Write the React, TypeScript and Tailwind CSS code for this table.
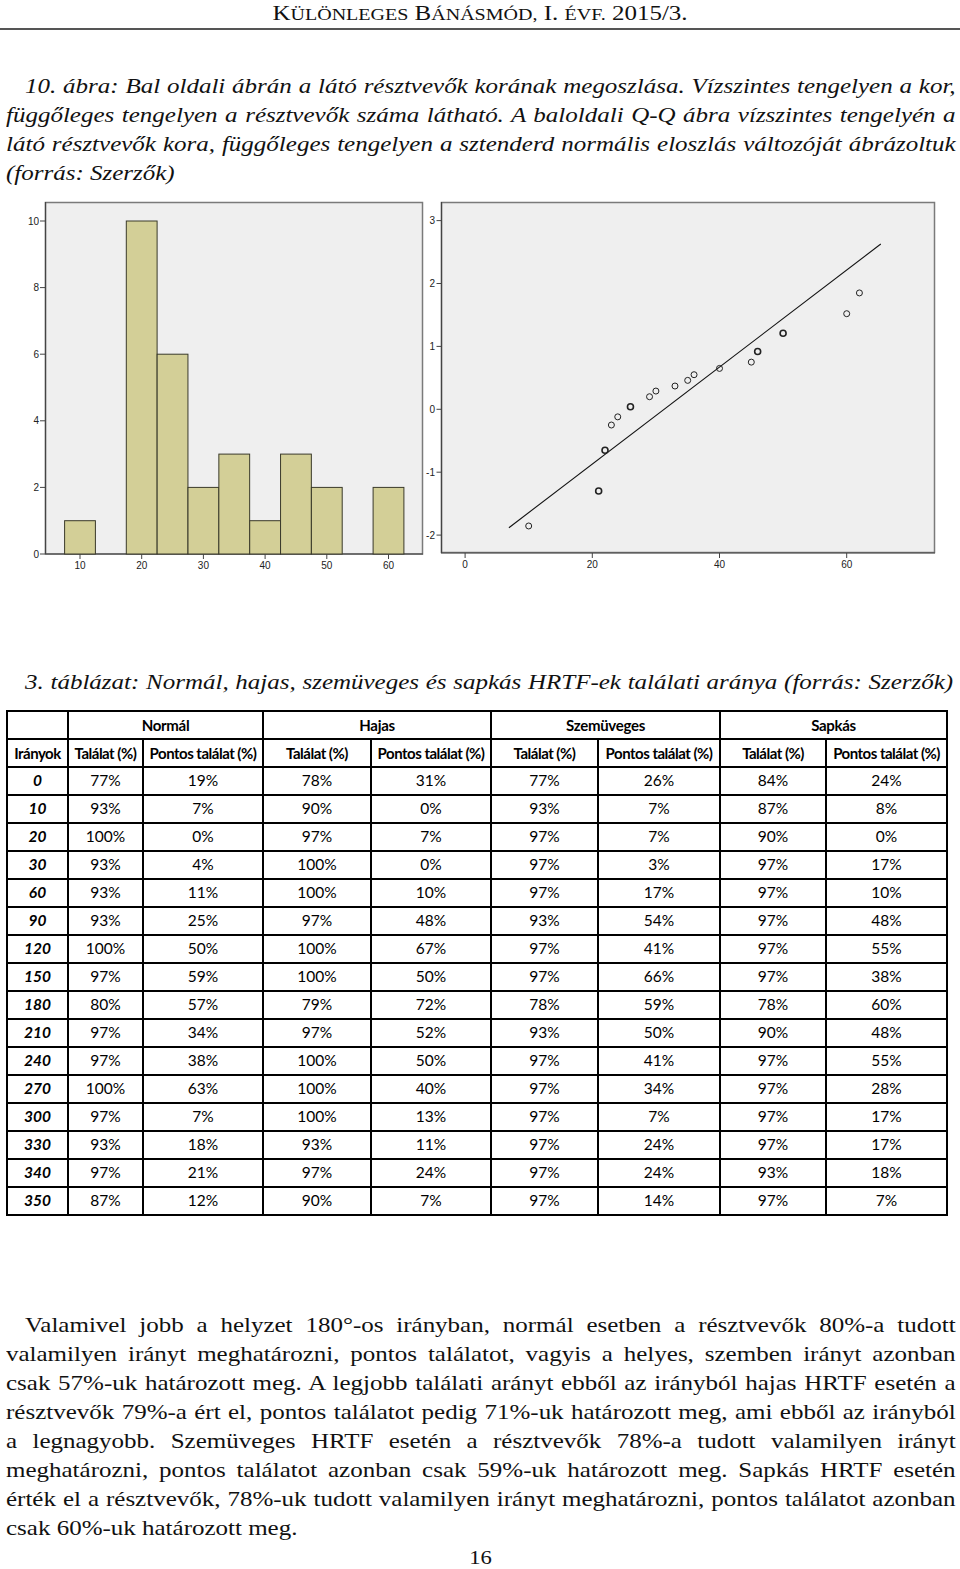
import React from "react";

const serif = { fontFamily: '"Liberation Serif", "Times New Roman", serif' } as const;
const sans = { fontFamily: '"Liberation Sans", Arial, sans-serif' } as const;

const histBars: [number, number][] = [
  [10, 1], [20, 10], [25, 6], [30, 2], [35, 3], [40, 1], [45, 3], [50, 2], [60, 2],
];
const hx = (v: number) => 80 + (v - 10) * 6.17;
const hy = (c: number) => 554 - c * 33.3;

const qqPoints: [number, number, boolean][] = [
  [10, -1.855, false], [21, -1.3, true], [22, -0.65, true], [23, -0.25, false],
  [24, -0.12, false], [26, 0.04, true], [29, 0.2, false], [30, 0.29, false],
  [33, 0.37, false], [35, 0.46, false], [36, 0.55, false], [40, 0.65, false],
  [45, 0.75, false], [46, 0.92, true], [50, 1.21, true], [60, 1.52, false], [62, 1.85, false],
];
const qx = (a: number) => 465.1 + a * 6.36;
const qy = (v: number) => 409.3 - v * 62.9;

function Histogram() {
  return (
    <svg width={424} height={385} viewBox="0 195 424 385" className="block shrink-0">
      <rect x={45.5} y={202.5} width={377} height={351.5} fill="#efefef" stroke="#7a7a7a" strokeWidth={1.5} />
      <line x1={45.5} y1={202} x2={45.5} y2={554} stroke="#444" strokeWidth={1.2} />
      <line x1={45} y1={554} x2={423} y2={554} stroke="#444" strokeWidth={1.2} />
      {histBars.map(([v, c]) => (
        <rect key={v} x={hx(v) - 15.4} y={hy(c)} width={30.8} height={c * 33.3} fill="#d3cf97" stroke="#3a3a2a" strokeWidth={1} />
      ))}
      {[0, 2, 4, 6, 8, 10].map((c) => (
        <g key={c}>
          <line x1={40} y1={hy(c)} x2={45} y2={hy(c)} stroke="#444" strokeWidth={1} />
          <text x={39} y={hy(c) + 3.5} fontSize={10} textAnchor="end" fill="#222" style={sans}>{c}</text>
        </g>
      ))}
      {[10, 20, 30, 40, 50, 60].map((v) => (
        <g key={v}>
          <line x1={hx(v)} y1={554} x2={hx(v)} y2={559} stroke="#444" strokeWidth={1} />
          <text x={hx(v)} y={569} fontSize={10} textAnchor="middle" fill="#222" style={sans}>{v}</text>
        </g>
      ))}
    </svg>
  );
}

function QQPlot() {
  return (
    <svg width={536} height={385} viewBox="424 195 536 385" className="block shrink-0">
      <rect x={441.5} y={202.5} width={493} height={350} fill="#efefef" stroke="#7a7a7a" strokeWidth={1.5} />
      <line x1={441.5} y1={202} x2={441.5} y2={553} stroke="#444" strokeWidth={1.2} />
      <line x1={441} y1={553} x2={935} y2={553} stroke="#444" strokeWidth={1.2} />
      <line x1={508.9} y1={527.7} x2={880.8} y2={244} stroke="#111" strokeWidth={1.1} />
      {qqPoints.map(([a, v, b], i) => (
        <circle key={i} cx={qx(a)} cy={qy(v)} r={3} fill="none" stroke="#222" strokeWidth={b ? 1.6 : 1} />
      ))}
      {[3, 2, 1, 0, -1, -2].map((v) => (
        <g key={v}>
          <line x1={436.5} y1={qy(v)} x2={441.5} y2={qy(v)} stroke="#444" strokeWidth={1} />
          <text x={435} y={qy(v) + 3.5} fontSize={10} textAnchor="end" fill="#222" style={sans}>{v}</text>
        </g>
      ))}
      {[0, 20, 40, 60].map((a) => (
        <g key={a}>
          <line x1={qx(a)} y1={553} x2={qx(a)} y2={558} stroke="#444" strokeWidth={1} />
          <text x={qx(a)} y={568} fontSize={10} textAnchor="middle" fill="#222" style={sans}>{a}</text>
        </g>
      ))}
    </svg>
  );
}

const rows: [string, string[]][] = [
  ["0", ["77%", "19%", "78%", "31%", "77%", "26%", "84%", "24%"]],
  ["10", ["93%", "7%", "90%", "0%", "93%", "7%", "87%", "8%"]],
  ["20", ["100%", "0%", "97%", "7%", "97%", "7%", "90%", "0%"]],
  ["30", ["93%", "4%", "100%", "0%", "97%", "3%", "97%", "17%"]],
  ["60", ["93%", "11%", "100%", "10%", "97%", "17%", "97%", "10%"]],
  ["90", ["93%", "25%", "97%", "48%", "93%", "54%", "97%", "48%"]],
  ["120", ["100%", "50%", "100%", "67%", "97%", "41%", "97%", "55%"]],
  ["150", ["97%", "59%", "100%", "50%", "97%", "66%", "97%", "38%"]],
  ["180", ["80%", "57%", "79%", "72%", "78%", "59%", "78%", "60%"]],
  ["210", ["97%", "34%", "97%", "52%", "93%", "50%", "90%", "48%"]],
  ["240", ["97%", "38%", "100%", "50%", "97%", "41%", "97%", "55%"]],
  ["270", ["100%", "63%", "100%", "40%", "97%", "34%", "97%", "28%"]],
  ["300", ["97%", "7%", "100%", "13%", "97%", "7%", "97%", "17%"]],
  ["330", ["93%", "18%", "93%", "11%", "97%", "24%", "97%", "17%"]],
  ["340", ["97%", "21%", "97%", "24%", "97%", "24%", "93%", "18%"]],
  ["350", ["87%", "12%", "90%", "7%", "97%", "14%", "97%", "7%"]],
];

const colWidths = [61, 75, 120, 108, 120, 107, 122, 106, 121];

function DataTable() {
  const cell = "border-2 border-black p-0 text-center align-middle";
  return (
    <table
      className="ml-[6px] mt-[13px] border-collapse table-fixed text-black"
      style={{ width: 940, fontFamily: 'Lato, "Open Sans", sans-serif' }}
    >
      <colgroup>
        {colWidths.map((w, i) => (
          <col key={i} style={{ width: w }} />
        ))}
      </colgroup>
      <thead>
        <tr className="h-[28px] text-[15px] font-bold tracking-[-0.3px]">
          <th className={cell}></th>
          <th className={cell} colSpan={2}>Normál</th>
          <th className={cell} colSpan={2}>Hajas</th>
          <th className={cell} colSpan={2}>Szemüveges</th>
          <th className={cell} colSpan={2}>Sapkás</th>
        </tr>
        <tr className="h-[28px] text-[15px] font-bold tracking-[-0.5px]">
          <th className={cell}>Irányok</th>
          {["Normál", "Hajas", "Szemüveges", "Sapkás"].map((g) => (
            <React.Fragment key={g}>
              <th className={cell}>Találat (%)</th>
              <th className={cell}>Pontos találat (%)</th>
            </React.Fragment>
          ))}
        </tr>
      </thead>
      <tbody>
        {rows.map(([dir, vals]) => (
          <tr key={dir} className="h-[28px] text-[15.5px]">
            <td className={`${cell} font-bold italic`}>{dir}</td>
            {vals.map((v, i) => (
              <td key={i} className={cell}>{v}</td>
            ))}
          </tr>
        ))}
      </tbody>
    </table>
  );
}

function JLines({ lines, className }: { lines: string[]; className?: string }) {
  return (
    <div className={"pl-[6px] " + (className ?? "")}>
      <div className="w-[798px] origin-left scale-x-[1.19]">
        {lines.map((l, i) => (
          <div
            key={i}
            className={
              (i === 0 ? "pl-[16px] " : "") +
              (i < lines.length - 1 ? "text-justify [text-align-last:justify]" : "text-left")
            }
          >
            {l}
          </div>
        ))}
      </div>
    </div>
  );
}

function SC({ big, small }: { big: string; small?: string }) {
  return (
    <>
      <span className="text-[20px]">{big}</span>
      {small ? <span className="text-[16px]">{small}</span> : null}
    </>
  );
}

export default function App() {
  return (
    <div className="w-[960px] h-[1569px] bg-white text-[#111] overflow-hidden" style={serif}>
      <div className="h-[30px] border-b-2 border-[#555] flex items-center justify-center pb-[2px]">
        <div className="scale-x-[1.25] leading-none whitespace-pre">
          <SC big="K" small="ÜLÖNLEGES" />
          <SC big=" B" small="ÁNÁSMÓD," />
          <SC big=" I. " small="ÉVF." />
          <SC big=" 2015/3." />
        </div>
      </div>

      <JLines
        className="mt-[42px] text-[21px] leading-[29px] italic"
        lines={[
          "10. ábra: Bal oldali ábrán a látó résztvevők korának megoszlása. Vízszintes tengelyen a kor,",
          "függőleges tengelyen a résztvevők száma látható. A baloldali Q-Q ábra vízszintes tengelyén a",
          "látó résztvevők kora, függőleges tengelyen a sztenderd normális eloszlás változóját ábrázoltuk",
          "(forrás: Szerzők)",
        ]}
      />

      <div className="mt-[7px] flex">
        <Histogram />
        <QQPlot />
      </div>

      <div className="mt-[88px] pl-[25px]">
        <div className="w-[780px] origin-left scale-x-[1.19] text-[21px] leading-[29px] italic text-justify [text-align-last:justify]">
          3. táblázat: Normál, hajas, szemüveges és sapkás HRTF-ek találati aránya (forrás: Szerzők)
        </div>
      </div>

      <DataTable />

      <JLines
        className="mt-[95px] text-[21px] leading-[29px]"
        lines={[
          "Valamivel jobb a helyzet 180°-os irányban, normál esetben a résztvevők 80%-a tudott",
          "valamilyen irányt meghatározni, pontos találatot, vagyis a helyes, szemben irányt azonban",
          "csak 57%-uk határozott meg. A legjobb találati arányt ebből az irányból hajas HRTF esetén a",
          "résztvevők 79%-a ért el, pontos találatot pedig 71%-uk határozott meg, ami ebből az irányból",
          "a legnagyobb. Szemüveges HRTF esetén a résztvevők 78%-a tudott valamilyen irányt",
          "meghatározni, pontos találatot azonban csak 59%-uk határozott meg. Sapkás HRTF esetén",
          "érték el a résztvevők, 78%-uk tudott valamilyen irányt meghatározni, pontos találatot azonban",
          "csak 60%-uk határozott meg.",
        ]}
      />

      <div className="mt-[6px] flex justify-center">
        <div className="scale-x-[1.19] text-[19px] leading-[18px]">16</div>
      </div>
    </div>
  );
}
